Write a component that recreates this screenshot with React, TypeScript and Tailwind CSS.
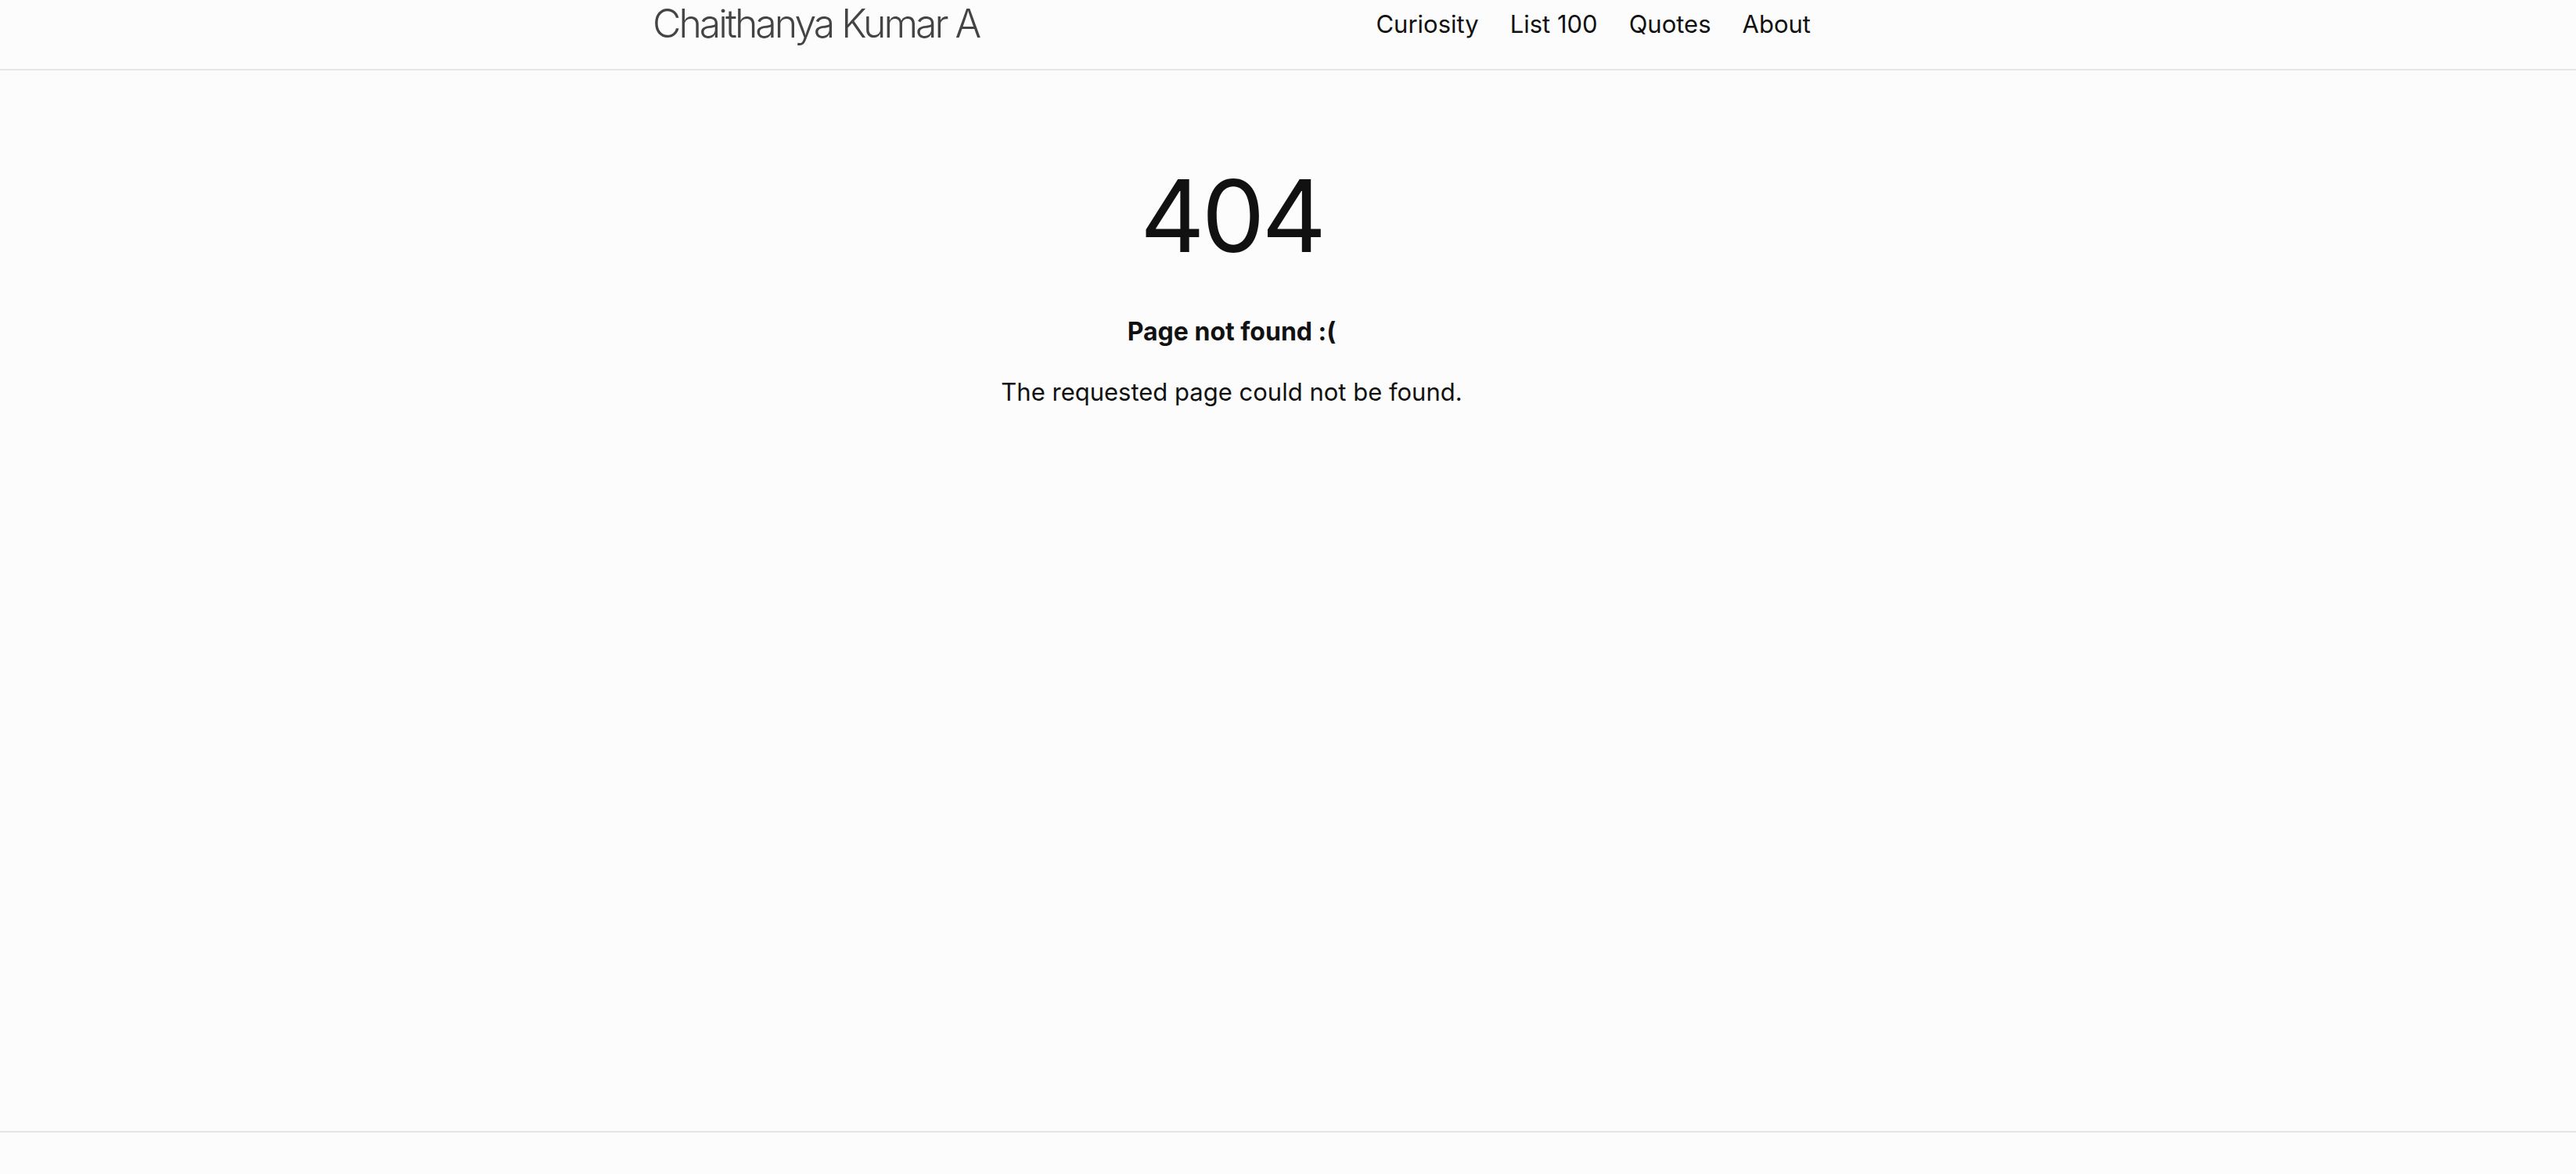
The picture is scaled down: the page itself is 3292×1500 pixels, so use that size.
import React from "react";

const navLinks = ["Curiosity", "List 100", "Quotes", "About"];

const App = () => {
  return (
    <div className="min-h-screen bg-[#fcfcfc] font-['Inter','Liberation_Sans',sans-serif] text-[#111111]">
      {/* Header */}
      <header className="border-b-2 border-[#e6e6e6]">
        <div className="ml-[834px] flex h-[88px] w-[1480px] items-start justify-between">
          <a className="mt-[5px] text-[50px] leading-none font-light tracking-[-3px] text-[#444444]">
            Chaithanya Kumar A
          </a>
          <nav className="mt-[15px] flex items-center gap-[40px] text-[31px] leading-none">
            {navLinks.map((link) => (
              <a key={link} className="cursor-pointer">
                {link}
              </a>
            ))}
          </nav>
        </div>
      </header>

      {/* Not found */}
      <main className="ml-[834px] flex h-[1355px] w-[1480px] flex-col items-center pt-[122px]">
        <h1 className="text-[128px] leading-none font-normal tracking-[-4px]">404</h1>
        <h2 className="mt-[60px] text-[32px] font-bold">Page not found :(</h2>
        <p className="mt-[30px] text-[31px]">The requested page could not be found.</p>
      </main>

      {/* Footer */}
      <footer className="h-[60px] border-t-2 border-[#e6e6e6]" />
    </div>
  );
};

export default App;
